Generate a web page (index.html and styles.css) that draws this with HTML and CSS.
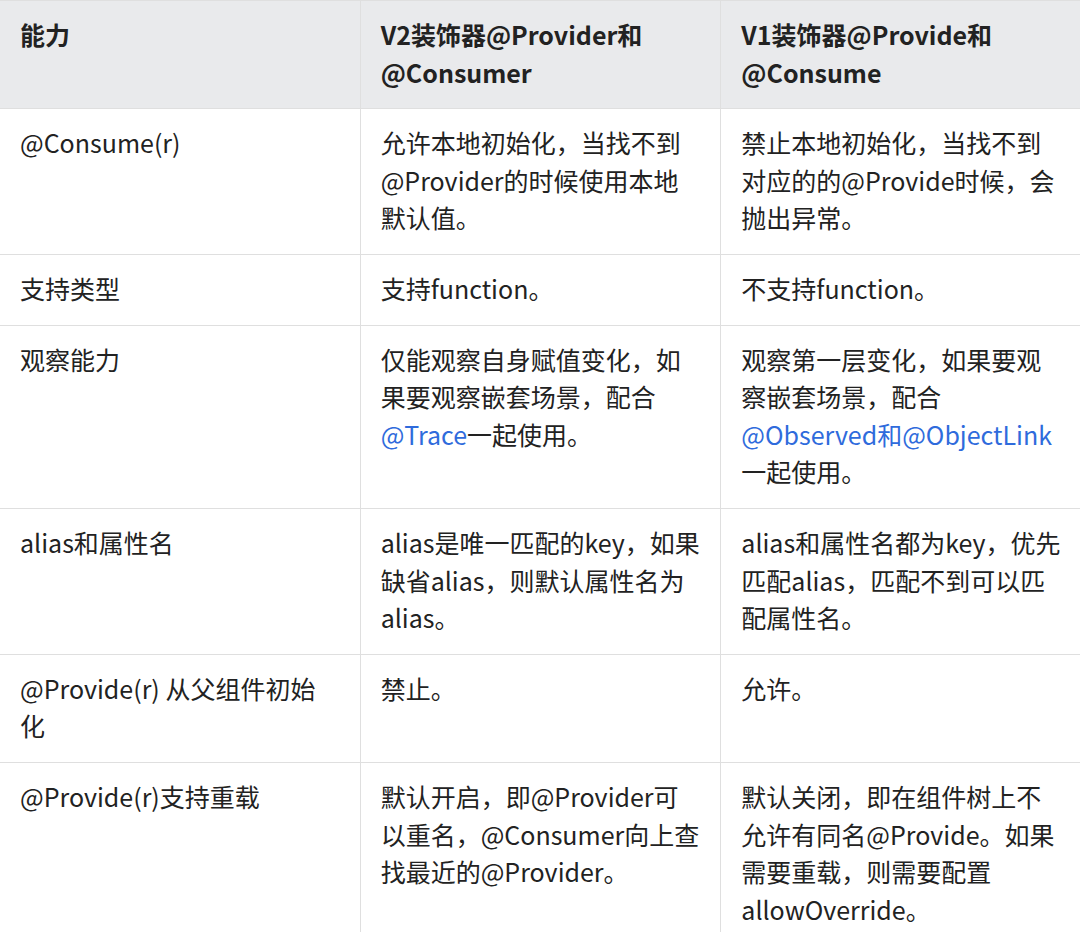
FILE: index.html
```html
<!DOCTYPE html>
<html lang="zh-CN">
<head>
<meta charset="utf-8">
<link rel="stylesheet" href="styles.css">
</head>
<body>
<div class="wrap">
<table class="cmp">
  <thead>
    <tr>
      <th>能力</th>
      <th>V2装饰器@Provider和@Consumer</th>
      <th>V1装饰器@Provide和@Consume</th>
    </tr>
  </thead>
  <tbody>
    <tr>
      <td>@Consume(r)</td>
      <td>允许本地初始化，当找不到@Provider的时候使用本地默认值。</td>
      <td>禁止本地初始化，当找不到对应的的@Provide时候，会抛出异常。</td>
    </tr>
    <tr>
      <td>支持类型</td>
      <td>支持function。</td>
      <td>不支持function。</td>
    </tr>
    <tr>
      <td>观察能力</td>
      <td>仅能观察自身赋值变化，如果要观察嵌套场景，配合<a class="link">@Trace</a>一起使用。</td>
      <td>观察第一层变化，如果要观察嵌套场景，配合<a class="link">@Observed和@ObjectLink</a>一起使用。</td>
    </tr>
    <tr>
      <td>alias和属性名</td>
      <td>alias是唯一匹配的key，如果缺省alias，则默认属性名为alias。</td>
      <td>alias和属性名都为key，优先匹配alias，匹配不到可以匹配属性名。</td>
    </tr>
    <tr>
      <td>@Provide(r) 从父组件初始化</td>
      <td>禁止。</td>
      <td>允许。</td>
    </tr>
    <tr>
      <td>@Provide(r)支持重载</td>
      <td>默认开启，即@Provider可以重名，@Consumer向上查找最近的@Provider。</td>
      <td>默认关闭，即在组件树上不允许有同名@Provide。如果需要重载，则需要配置allowOverride。</td>
    </tr>
  </tbody>
</table>
</div>
</body>
</html>
```

FILE: styles.css
```css
html, body {
  margin: 0;
  padding: 0;
  background: #ffffff;
}
.wrap {
  width: 1080px;
  height: 932px;
  overflow: hidden;
}
.cmp {
  border-collapse: collapse;
  table-layout: fixed;
  width: 1083px;
  margin-left: -1px;
  font-family: "Noto Sans CJK SC", "Noto Sans", sans-serif;
  font-size: 25px;
  line-height: 37.6px;
  color: #222222;
}
.cmp th, .cmp td {
  width: 320px;
  border: 1px solid #dfdfdf;
  padding: 15px 19px 17px 20px;
  text-align: left;
  vertical-align: top;
  word-break: normal;
  overflow-wrap: normal;
  line-break: normal;
}
.cmp th:first-child, .cmp td:first-child {
  width: 316px;
  padding-right: 23px;
}
.cmp th {
  background: #e9eaec;
  font-weight: 700;
}
.link {
  color: #2f6bdc;
  text-decoration: none;
}
```
